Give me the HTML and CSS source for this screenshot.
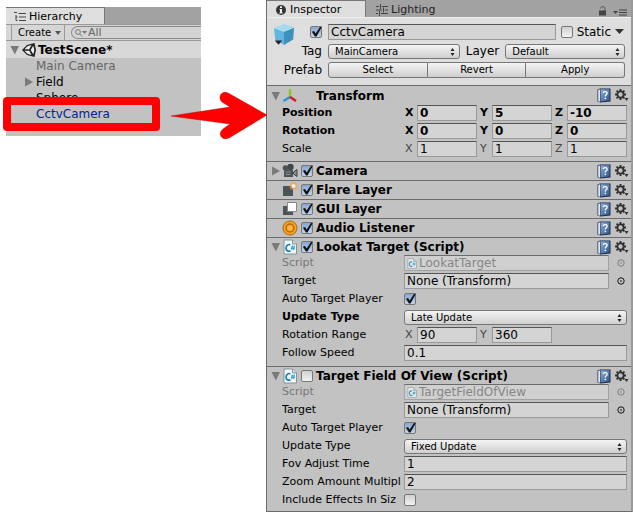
FILE: index.html
```html
<!DOCTYPE html>
<html lang="en">
<head>
<meta charset="utf-8">
<title>Scene editor</title>
<link rel="stylesheet" href="styles.css">
</head>
<body>
<svg class="sprite" aria-hidden="true">
  <defs>
    <linearGradient id="page" x1="0" y1="0" x2="1" y2="1"><stop offset="0" stop-color="#8fb0d8"/><stop offset="1" stop-color="#2f5388"/></linearGradient>
  </defs>
  <symbol id="down" viewBox="0 0 10 10"><path d="M.5 1h8.500L4.800 9.500z" fill="#7a7a7a"/></symbol>
  <symbol id="right" viewBox="0 0 10 10"><path d="M1 .5v9l8-4.500z" fill="#7a7a7a"/></symbol>
  <symbol id="updown" viewBox="0 0 5 8"><path d="M2.500 0L4.500 3h-4zM.5 5h4L2.500 8z" fill="#222"/></symbol>
  <symbol id="book" viewBox="0 0 14 15"><path d="M.5 1.500L3 .5h10.500v13L3.500 14.500l-3-1z" fill="#1f2f4c"/><path d="M1.200 2l1.800-.8v12.600l-1.800-.6z" fill="#dfe6ef"/><path d="M3.500 1.200h9v11.300l-9 1z" fill="url(#page)"/><path d="M6.200 5.200q.2-1.700 2-1.600 2 .1 1.900 1.700 0 1-1 1.500-.8.500-.8 1.700" fill="none" stroke="#fff" stroke-width="1.300"/><path d="M7.600 9.700h1.500v1.500H7.600z" fill="#fff"/></symbol>
  <symbol id="gear" viewBox="0 0 14 13"><circle cx="5.500" cy="5.500" r="3.100" fill="none" stroke="#303030" stroke-width="1.800"/><g stroke="#303030" stroke-width="1.900"><path d="M5.500 0v2M5.500 9v2M0 5.500h2M9 5.500h2M1.600 1.600L3 3M8 8l1.400 1.400M9.400 1.600L8 3M3 8L1.600 9.400"/></g><path d="M9.500 9H13.500l-2 3z" fill="#303030"/></symbol>
  <symbol id="script" viewBox="0 0 14 16"><path d="M1 1h8.500l4 4v10H1z" fill="#f3f6f7" stroke="#80969f"/><path d="M9.500 1v4h4" fill="#d4dde0" stroke="#80969f"/><path d="M7.300 6Q6.300 5 4.800 5.800 3 7 3 9q.2 2.800 2.300 3.300 1.200.2 2.100-.7" fill="none" stroke="#0878a8" stroke-width="1.500"/><path d="M9.300 6.500L8.700 11M11.300 6.500l-.6 4.500M8 8h4M7.800 9.700h4" stroke="#1593c7" stroke-width=".8"/></symbol>
  <symbol id="pick" viewBox="0 0 8 8"><circle cx="4" cy="4" r="3.200" fill="none" stroke="currentColor" stroke-width=".9"/><circle cx="4" cy="4" r=".8" fill="currentColor"/></symbol>
</svg>

<main class="desk">
  <section class="panel hierarchy" aria-label="Hierarchy">
    <div class="tabs">
      <div class="tab">
        <svg class="i12" viewBox="0 0 12 12"><path d="M0 1.500h3M4.500 2.500H12M2 4v5.500M2 6h1.500M2 9.500h1.500M5 6h7M5 9.500h7" stroke="#444" fill="none"/></svg>
        <span>Hierarchy</span>
      </div>
    </div>
    <div class="toolbar">
      <button class="create" type="button">Create <svg viewBox="0 0 6 4"><path d="M0 0h6L3 4z" fill="#555"/></svg></button>
      <label class="search">
        <svg viewBox="0 0 12 8"><circle cx="3" cy="3" r="2.400" fill="none" stroke="#777"/><path d="M5 5l2 2.500" stroke="#777"/><path d="M7 2h5L9.500 5z" fill="#777"/></svg>
        <input type="text" value="All" aria-label="Search">
      </label>
    </div>
    <div class="scene">
      <svg class="fold"><use href="#down"/></svg>
      <svg class="i14" viewBox="0 0 14 14"><path d="M0 7L5 2l7.500-2L14 7l-1.500 7L5 12z" fill="#222"/><path d="M2.500 6.200L5.500 3.200 9.500 2 7.200 6.200zM2.500 7.800h4.700L9.500 12l-4-1.200zM8.700 7L11.300 2.800 12.300 7l-1 4.200z" fill="#f0f0f0"/></svg>
      <strong>TestScene*</strong>
    </div>
    <ul class="tree">
      <li class="dim">Main Camera</li>
      <li><svg class="fold"><use href="#right"/></svg>Field</li>
      <li>Sphere</li>
      <li class="prefab">CctvCamera</li>
    </ul>
  </section>

  <section class="panel inspector" aria-label="Inspector">
    <div class="tabs">
      <div class="tab">
        <svg class="i12" viewBox="0 0 12 12"><circle cx="6" cy="6" r="5" fill="#333"/><path d="M5 2.300h2V4H5zM4.500 5H7v3.500h.7v1H4.300v-1H5V6h-.5z" fill="#eee"/></svg>
        <span>Inspector</span>
      </div>
      <div class="tab idle">
        <svg class="i12" viewBox="0 0 12 12"><path d="M0 2.500h3M6 2.500h6M0 6h6M9 6h3M0 9.500h2M5 9.500h7M4.500 0v5M7.500 3.500v5M3.500 7v5" stroke="#444" fill="none"/></svg>
        <span>Lighting</span>
      </div>
      <svg class="lock" viewBox="0 0 8 10"><path d="M0 4.500h7V9.500H0z" fill="#444"/><path d="M1.500 2.500Q2 .5 3.800.5 6 .7 6 3v2" fill="none" stroke="#555"/></svg>
      <svg class="menu" viewBox="0 0 14 7"><path d="M0 2h5L2.500 5z" fill="#444"/><path d="M6 1h8M6 3.500h8M6 6h8" stroke="#444"/></svg>
    </div>

    <header class="object">
      <svg class="cube" viewBox="0 0 24 24"><path d="M12 0l11 3.500L12 8 1 4z" fill="#a6dbef"/><path d="M1 4l11 4v15L2.500 17.500z" fill="#62b5dc"/><path d="M23 3.500L12 8v15l10-6z" fill="#3e91bd"/><path d="M1 4l11 4 11-4.500" fill="none" stroke="#b9e5f3"/><path d="M2 18h8l-4 4.500z" fill="#222"/></svg>
      <div class="object-rows">
        <div class="line">
          <span class="cap"><input type="checkbox" checked aria-label="Active"></span>
          <input class="field" type="text" value="CctvCamera" aria-label="Name">
          <label class="static"><input type="checkbox"><span>Static</span></label>
          <svg class="drop" viewBox="0 0 10 6"><path d="M0 0h9L4.500 5z" fill="#333"/></svg>
        </div>
        <div class="line">
          <label class="cap" for="tag">Tag</label>
          <span class="select tag"><select id="tag"><option>MainCamera</option></select><svg><use href="#updown"/></svg></span>
          <label class="layer" for="layer">Layer</label>
          <span class="select"><select id="layer"><option>Default</option></select><svg><use href="#updown"/></svg></span>
        </div>
        <div class="line">
          <span class="cap">Prefab</span>
          <span class="group"><button type="button">Select</button><button type="button">Revert</button><button type="button">Apply</button></span>
        </div>
      </div>
    </header>

    <article class="component">
      <div class="head">
        <svg class="fold"><use href="#down"/></svg>
        <svg class="icon" viewBox="0 0 16 16"><path d="M8 9V1" stroke="#8bc91e" stroke-width="2.500"/><path d="M8 9l-6.500 4" stroke="#2996cf" stroke-width="2.500"/><path d="M8 9l6 4" stroke="#d81820" stroke-width="2.500"/></svg>
        <h2>Transform</h2>
        <svg class="book"><use href="#book"/></svg><svg class="gear"><use href="#gear"/></svg>
      </div>
      <div class="row bold"><span class="name">Position</span><div class="vec"><label>X<input class="field" type="text" value="0"></label><label>Y<input class="field" type="text" value="5"></label><label>Z<input class="field" type="text" value="-10"></label></div></div>
      <div class="row bold"><span class="name">Rotation</span><div class="vec"><label>X<input class="field" type="text" value="0"></label><label>Y<input class="field" type="text" value="0"></label><label>Z<input class="field" type="text" value="0"></label></div></div>
      <div class="row thin"><span class="name">Scale</span><div class="vec"><label>X<input class="field" type="text" value="1"></label><label>Y<input class="field" type="text" value="1"></label><label>Z<input class="field" type="text" value="1"></label></div></div>
    </article>

    <article class="component closed">
      <div class="head">
        <svg class="fold"><use href="#right"/></svg>
        <svg class="icon" viewBox="0 0 16 16"><circle cx="3.500" cy="5" r="2.800" fill="#4c5356"/><circle cx="8.500" cy="4" r="3.200" fill="#42494c"/><path d="M2 7h9v7H2z" fill="#4c5356"/><path d="M11.500 9L15 6.500v7l-3.500-2.500z" fill="#899093" stroke="#3b4144"/><path d="M3.500 9h5M3.500 11.500h5" stroke="#8d9598"/></svg>
        <input type="checkbox" checked id="c1"><h2><label for="c1">Camera</label></h2>
        <svg class="book"><use href="#book"/></svg><svg class="gear"><use href="#gear"/></svg>
      </div>
    </article>
    <article class="component closed">
      <div class="head">
        <span class="fold"></span>
        <svg class="icon" viewBox="0 0 16 16"><path d="M1 4h10v10H1z" fill="#4b5456"/><circle cx="11.500" cy="4" r="4" fill="#eda35c" opacity=".65"/><circle cx="11.500" cy="4" r="2" fill="#fff2d8"/></svg>
        <input type="checkbox" checked id="c2"><h2><label for="c2">Flare Layer</label></h2>
        <svg class="book"><use href="#book"/></svg><svg class="gear"><use href="#gear"/></svg>
      </div>
    </article>
    <article class="component closed">
      <div class="head">
        <span class="fold"></span>
        <svg class="icon" viewBox="0 0 16 16"><path d="M1 5h10v9H1z" fill="#4b5456"/><path d="M5.500 1.500h9v9h-9z" fill="#fff" stroke="#888"/></svg>
        <input type="checkbox" checked id="c3"><h2><label for="c3">GUI Layer</label></h2>
        <svg class="book"><use href="#book"/></svg><svg class="gear"><use href="#gear"/></svg>
      </div>
    </article>
    <article class="component closed">
      <div class="head">
        <span class="fold"></span>
        <svg class="icon" viewBox="0 0 16 16"><circle cx="8" cy="8" r="7" fill="#ffa31a" stroke="#a7670e"/><circle cx="8" cy="8" r="4" fill="#ff9c0c" stroke="#a86a1c" stroke-width="1.300"/><circle cx="8" cy="8" r="2.600" fill="#f9b652"/></svg>
        <input type="checkbox" checked id="c4"><h2><label for="c4">Audio Listener</label></h2>
        <svg class="book"><use href="#book"/></svg><svg class="gear"><use href="#gear"/></svg>
      </div>
    </article>

    <article class="component script">
      <div class="head">
        <svg class="fold"><use href="#down"/></svg>
        <svg class="icon"><use href="#script"/></svg>
        <input type="checkbox" checked id="c5"><h2><label for="c5">Lookat Target (Script)</label></h2>
        <svg class="book"><use href="#book"/></svg><svg class="gear"><use href="#gear"/></svg>
      </div>
      <div class="row faded"><label class="name" for="s1">Script</label><span class="field asset"><svg><use href="#script"/></svg><input id="s1" type="text" value="LookatTarget" disabled></span><svg class="pick"><use href="#pick"/></svg></div>
      <div class="row"><label class="name" for="t1">Target</label><input id="t1" class="field" type="text" value="None (Transform)"><svg class="pick"><use href="#pick"/></svg></div>
      <div class="row"><label class="name" for="a1">Auto Target Player</label><input id="a1" type="checkbox" checked></div>
      <div class="row bold"><label class="name" for="u1">Update Type</label><span class="select"><select id="u1"><option>Late Update</option></select><svg><use href="#updown"/></svg></span></div>
      <div class="row thin"><span class="name">Rotation Range</span><div class="vec"><label>X<input class="field" type="text" value="90"></label><label>Y<input class="field" type="text" value="360"></label></div></div>
      <div class="row"><label class="name" for="f1">Follow Speed</label><input id="f1" class="field" type="text" value="0.1"></div>
    </article>

    <article class="component script">
      <div class="head">
        <svg class="fold"><use href="#down"/></svg>
        <svg class="icon"><use href="#script"/></svg>
        <input type="checkbox" id="c6"><h2><label for="c6">Target Field Of View (Script)</label></h2>
        <svg class="book"><use href="#book"/></svg><svg class="gear"><use href="#gear"/></svg>
      </div>
      <div class="row faded"><label class="name" for="s2">Script</label><span class="field asset"><svg><use href="#script"/></svg><input id="s2" type="text" value="TargetFieldOfView" disabled></span><svg class="pick"><use href="#pick"/></svg></div>
      <div class="row"><label class="name" for="t2">Target</label><input id="t2" class="field" type="text" value="None (Transform)"><svg class="pick"><use href="#pick"/></svg></div>
      <div class="row"><label class="name" for="a2">Auto Target Player</label><input id="a2" type="checkbox" checked></div>
      <div class="row"><label class="name" for="u2">Update Type</label><span class="select"><select id="u2"><option>Fixed Update</option></select><svg><use href="#updown"/></svg></span></div>
      <div class="row"><label class="name" for="f2">Fov Adjust Time</label><input id="f2" class="field" type="text" value="1"></div>
      <div class="row"><label class="name" for="z2">Zoom Amount Multipl</label><input id="z2" class="field" type="text" value="2"></div>
      <div class="row"><label class="name" for="i2">Include Effects In Siz</label><input id="i2" type="checkbox"></div>
    </article>
  </section>

  <div class="marker" aria-hidden="true"></div>
  <svg class="arrow" viewBox="0 0 100 50" aria-hidden="true"><path d="M1 26l59-9-8-5C47 7 52 0 58 3l39 22-38 23c-7 3-12-4-6-9l7-5z" fill="#f00" stroke="#a11" stroke-width=".5"/></svg>
</main>
</body>
</html>
```
FILE: styles.css
```css
* { box-sizing: border-box; }

body {
  margin: 0;
  background: #fff;
  color: #000;
  font: 11px/16px "DejaVu Sans", sans-serif;
}

input, select, button { font: inherit; color: inherit; margin: 0; }
svg { display: block; flex: none; }
.sprite { position: absolute; width: 0; height: 0; }

.desk {
  position: relative;
  display: flex;
  align-items: flex-start;
  justify-content: space-between;
  gap: 65px;
  padding-left: 6px;
}

.panel { background: #c2c2c2; }

/* Tabs */
.tabs {
  display: flex;
  align-items: center;
  height: 17px;
  background: #a2a2a2;
}
.tab {
  display: flex;
  align-items: center;
  gap: 3px;
  height: 100%;
  padding: 2px 0 0 8px;
  width: 99px;
  background: #dedede;
  border-top: 1px solid #777;
  border-right: 1px solid #777;
}
.tab.idle { background: none; border-color: transparent; color: #222; flex: 1; padding-left: 10px; }
.i12 { width: 12px; height: 12px; }
.i14 { width: 14px; height: 14px; }
.lock { width: 8px; height: 10px; margin: 4px 6px 0 0; }
.menu { width: 14px; height: 7px; margin: 8px 4px 0 0; }
.fold { width: 10px; height: 10px; }

/* Hierarchy */
.hierarchy { flex: 0 1 195px; margin-top: 7px; padding-bottom: 14px; }
.toolbar {
  display: flex;
  height: 17px;
  padding-left: 5px;
  background: #d6d6d6;
  border-top: 1px solid #999;
  border-bottom: 1px solid #999;
}
.create {
  display: flex;
  align-items: center;
  gap: 4px;
  width: 54px;
  padding: 0 0 0 6px;
  border: solid #999;
  border-width: 0 1px;
  background: none;
  font-size: 10px;
  white-space: nowrap;
}
.create svg { width: 6px; height: 4px; }
.search {
  display: flex;
  align-items: center;
  flex: 1;
  gap: 1px;
  margin: 1px 0 1px 6px;
  padding-left: 3px;
  border: 1px solid #888;
  border-right: 0;
  border-radius: 8px 0 0 8px;
  background: #d4d4d4;
  color: #666;
}
.search svg { width: 12px; height: 8px; }
.search input { width: 100%; min-width: 0; height: 12px; padding: 0; border: 0; background: none; }
.scene {
  display: flex;
  align-items: center;
  gap: 2px;
  height: 17px;
  padding-left: 4px;
  background: #d8d8d8;
  font-size: 12px;
}
.tree { list-style: none; margin: 0; padding: 0; }
.tree li { display: flex; align-items: center; gap: 2px; height: 16px; padding-left: 30px; font-size: 12px; }
.tree .fold { margin-left: -12px; }
.dim { color: #666; }
.prefab { color: #00268a; }

/* Inspector */
.inspector {
  flex: 1;
  min-width: 0;
  border-left: 1px solid #6c6c6c;
  border-right: 2px solid #999;
  border-bottom: 1px solid #6c6c6c;
}
.object {
  display: flex;
  padding: 6px 6px 7px 6px;
  background: #dedede;
  border-top: 1px solid #eee;
}
.cube { width: 22px; height: 22px; margin-right: -15px; }
.object-rows { flex: 1; display: grid; gap: 3px; min-width: 0; }
.line { display: flex; align-items: center; height: 16px; font-size: 12px; }
.cap { display: flex; justify-content: flex-end; width: 48px; padding-right: 6px; flex: none; }
.static { display: flex; align-items: center; gap: 4px; margin-left: 5px; }
.drop { width: 10px; height: 6px; margin-left: 4px; }
.layer { margin: 0 6px; }
.group { display: flex; flex: 1; }
.group button {
  flex: 1;
  height: 16px;
  padding: 0;
  border: 1px solid #777;
  border-left-width: 0;
  background: linear-gradient(#f4f4f4, #cfcfcf);
  font-size: 10px;
  line-height: 14px;
}
.group button:first-child { border-left-width: 1px; border-radius: 3px 0 0 3px; }
.group button:last-child { border-radius: 0 3px 3px 0; }

/* Controls */
input[type="checkbox"] {
  appearance: none;
  flex: none;
  position: relative;
  width: 12px;
  height: 12px;
  border: 1px solid #777;
  border-radius: 2px;
  background: linear-gradient(#d0d0d0, #f2f2f2);
}
input[type="checkbox"]:checked { background: linear-gradient(#86a6d0, #c0d4ee); }
input[type="checkbox"]:checked::after {
  content: "";
  position: absolute;
  inset: -1px -1px 0 0;
  background: #111;
  clip-path: polygon(8% 52%, 28% 46%, 42% 68%, 82% 8%, 100% 4%, 50% 96%, 36% 96%);
}
.field {
  flex: 1;
  min-width: 0;
  width: 100%;
  height: 16px;
  padding: 0 2px;
  border: 1px solid #999;
  border-top-color: #555;
  border-radius: 0;
  background: #d4d4d4;
  font-size: 12px;
}
.select { position: relative; flex: 10; min-width: 0; display: flex; }
.select.tag { flex-grow: 11; }
select {
  appearance: none;
  width: 100%;
  height: 15px;
  padding: 0 6px;
  border: 1px solid #777;
  border-radius: 3px;
  background: linear-gradient(#f4f4f4, #cfcfcf);
  font-size: 10px;
  font-weight: normal;
  line-height: 13px;
}
.select svg { position: absolute; right: 5px; top: 4px; width: 5px; height: 8px; }

/* Components */
.component { border-top: 1px solid #6c6c6c; padding-bottom: 3px; }
.component.closed { padding-bottom: 0; }
.component.script { padding-bottom: 4px; }
.component.script:last-child { padding-bottom: 2px; }
.head { display: flex; align-items: center; height: 18px; padding: 1px 2px 0 4px; }
.closed .head { padding-top: 0; }
.script .head { height: 16px; padding-top: 2px; }
.head .icon { width: 16px; height: 16px; margin: 0 3px 0 1px; }
.head h2 { flex: 1; margin: 0 0 0 3px; font-size: 12px; line-height: 16px; }
.head .icon + h2 { margin-left: 15px; }
.book { width: 14px; height: 15px; margin-right: 4px; }
.gear { width: 14px; height: 13px; }
.row { display: flex; align-items: center; height: 18px; padding: 0 4px 0 15px; }
.name { flex: none; width: 122px; overflow: hidden; white-space: nowrap; }
.bold { font-weight: bold; }
.faded { color: #777; }
.vec { flex: 1; display: grid; grid-template-columns: repeat(3, 1fr); gap: 2px; }
.vec label { display: grid; grid-template-columns: 12px 1fr; align-items: center; padding-left: 1px; }
.thin .vec label { color: #444; }
.thin .vec .field { color: #000; }
.asset { display: flex; align-items: center; gap: 2px; opacity: 0.8; }
.asset svg { width: 10px; height: 11px; }
.asset input { flex: 1; min-width: 0; height: 14px; padding: 0; border: 0; background: none; }
.pick { width: 8px; height: 8px; margin: 0 2px 0 8px; }

/* Callout over the panels */
.marker {
  position: absolute;
  left: 3px;
  top: 97px;
  width: 157px;
  height: 34px;
  border: 8px solid #f00;
  border-radius: 4px;
}
.arrow { position: absolute; left: 170px; top: 90px; width: 100px; height: 50px; }
```
